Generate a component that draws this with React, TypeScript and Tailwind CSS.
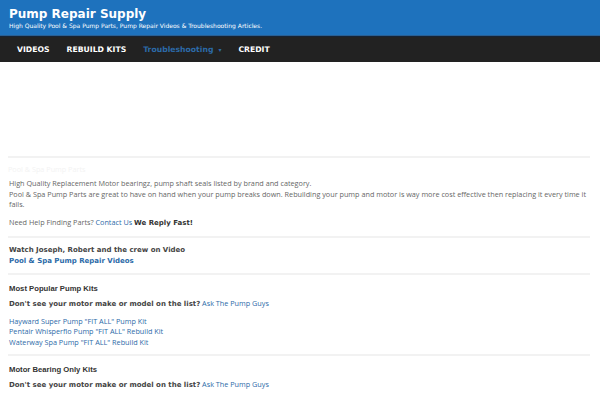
import React from 'react';

export default function App() {
  const kits = [
    'Hayward Super Pump "FIT ALL" Pump Kit',
    'Pentair Whisperflo Pump "FIT ALL" Rebuild Kit',
    'Waterway Spa Pump "FIT ALL" Rebuild Kit',
  ];

  return (
    <div className="w-[600px] h-[400px] overflow-hidden bg-white font-['Open_Sans',sans-serif]">
      {/* Site header */}
      <div className="bg-[#1e72bd] h-[36px] px-[9px] pt-[7px] border-b border-[#2a5f92]">
        <div className="text-white font-bold text-[12px] leading-[15px] font-['DejaVu_Sans',sans-serif]">
          Pump Repair Supply
        </div>
        <div className="text-white text-[6px] leading-[8px] font-['DejaVu_Sans',sans-serif]">
          High Quality Pool &amp; Spa Pump Parts, Pump Repair Videos &amp; Troubleshooting Articles.
        </div>
      </div>

      {/* Nav */}
      <div className="bg-[#222] h-[26px] flex items-center pl-[17px] gap-[17px] border-t border-[#152335] font-['DejaVu_Sans',sans-serif] font-bold text-[7.7px] text-white pt-px">
        <span>VIDEOS</span>
        <span>REBUILD KITS</span>
        <span className="text-[#2c6aa8] flex items-center gap-[5px]">
          Troubleshooting <span className="text-[6px]">▾</span>
        </span>
        <span>CREDIT</span>
      </div>

      <div className="px-[8px] pt-[94px] text-[#666] text-[7.25px]">
        <div className="border-t-2 border-[#f2f2f2] w-[582px]" />
        <div className="text-[#f3f3f3] pt-[6px] leading-[11px]">Pool &amp; Spa Pump Parts</div>
        <div className="pl-px pt-[3px] leading-[10.5px]">
          High Quality Replacement Motor bearingz, pump shaft seals listed by brand and category.
          <br />
          Pool &amp; Spa Pump Parts are great to have on hand when your pump breaks down. Rebuilding your pump and motor is way more cost effective then replacing it every time it fails.
        </div>
        <div className="pl-px pt-[7px] leading-[11px]">
          Need Help Finding Parts? <span className="text-[#2c6aa8]">Contact Us</span>{' '}
          <span className="font-bold text-[#333] font-['DejaVu_Sans',sans-serif] text-[7px]">We Reply Fast!</span>
        </div>
        <div className="border-t-2 border-[#f2f2f2] w-[582px] mt-[7px]" />

        <div className="pl-px pt-[7px] font-['DejaVu_Sans',sans-serif] font-bold leading-[11px] text-[7px]">
          <div className="text-[#444]">Watch Joseph, Robert and the crew on Video</div>
          <div className="text-[#2c6aa8]">Pool &amp; Spa Pump Repair Videos</div>
        </div>
        <div className="border-t-2 border-[#f2f2f2] w-[582px] mt-[6px]" />

        <div className="pl-px pt-[8px] font-['Liberation_Sans',sans-serif] font-bold text-[#333] text-[7.7px] leading-[11px]">
          Most Popular Pump Kits
        </div>
        <div className="pl-px pt-[4px] leading-[11px]">
          <span className="font-['DejaVu_Sans',sans-serif] font-bold text-[#444] text-[7px]">Don't see your motor make or model on the list?</span>{' '}
          <span className="text-[#2c6aa8]">Ask The Pump Guys</span>
        </div>
        <div className="pl-px pt-[6px] leading-[10.5px] text-[#2c6aa8]">
          {kits.map((k) => (
            <div key={k}>{k}</div>
          ))}
        </div>
        <div className="border-t-2 border-[#f2f2f2] w-[582px] mt-[7px]" />

        <div className="pl-px pt-[8px] font-['Liberation_Sans',sans-serif] font-bold text-[#333] text-[7.7px] leading-[11px]">
          Motor Bearing Only Kits
        </div>
        <div className="pl-px pt-[4px] leading-[11px]">
          <span className="font-['DejaVu_Sans',sans-serif] font-bold text-[#444] text-[7px]">Don't see your motor make or model on the list?</span>{' '}
          <span className="text-[#2c6aa8]">Ask The Pump Guys</span>
        </div>
      </div>
    </div>
  );
}
